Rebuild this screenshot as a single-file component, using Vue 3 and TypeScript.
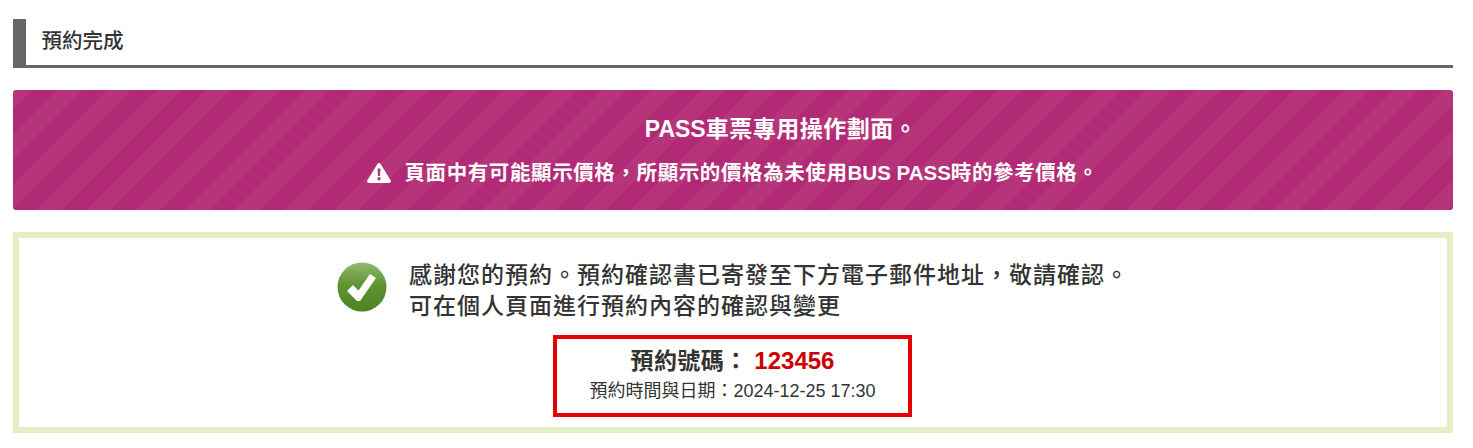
<script setup lang="ts">
const title = '預約完成'
</script>

<template>
  <main class="page" lang="zh-Hant">
    <h2 class="heading">{{ title }}</h2>
    <section class="banner">
      <p class="banner-title"><span class="latin">PASS</span>車票專用操作劃面。</p>
      <p class="banner-note">
        <svg class="warn" viewBox="0 0 24 20" width="24" height="20" aria-hidden="true">
          <path fill="#fff" fill-rule="evenodd" d="M12 0c.7 0 1.200.4 1.600 1l10 16.200c.8 1.400 0 2.800-1.600 2.800H2c-1.600 0-2.400-1.400-1.600-2.800L10.400 1c.4-.6.900-1 1.600-1zM10.500 5.500l.5 7.500h2l.5-7.500h-3zM12 14a1.700 1.700 0 1 0 0 3.400 1.700 1.700 0 0 0 0-3.400z"/>
        </svg>
        <span>頁面中有可能顯示價格，所顯示的價格為未使用<span class="latin">BUS PASS</span>時的參考價格。</span>
      </p>
    </section>
    <section class="done">
      <div class="thanks">
        <svg class="check" viewBox="0 0 50 50" width="50" height="50" aria-hidden="true">
          <defs>
            <linearGradient id="g" x1="0" y1="0" x2="0" y2="1">
              <stop offset="0" stop-color="#93b96f" />
              <stop offset="0.45" stop-color="#5f9433" />
              <stop offset="1" stop-color="#4c8424" />
            </linearGradient>
          </defs>
          <circle cx="25" cy="25" r="24.500" fill="url(#g)" />
          <path fill="#fff" d="M10 29l6-6 5.500 5.500L33 12l6 4-16 23h-3z" />
        </svg>
        <p class="thanks-text">感謝您的預約。預約確認書已寄發至下方電子郵件地址，敬請確認。<br />可在個人頁面進行預約內容的確認與變更</p>
      </div>
      <div class="number-box">
        <p class="number">預約號碼： <b>123456</b></p>
        <p class="date">預約時間與日期：2024-12-25 17:30</p>
      </div>
    </section>
  </main>
</template>

<style scoped>
.page {
  width: 1440px;
  margin-left: 13px;
  padding-top: 19px;
  color: #333;
  font-family: "Liberation Sans", "Noto Sans CJK TC", sans-serif;
}
p, h2 { margin: 0; }
.heading {
  height: 46px;
  border-left: 13px solid #666;
  border-bottom: 3px solid #666;
  padding-left: 15.500px;
  font-size: 20.500px;
  font-weight: 500;
  line-height: 43px;
}
.banner {
  height: 120px;
  margin-top: 22px;
  border-radius: 3px;
  color: #fff;
  font-weight: 700;
  text-align: center;
  background: repeating-linear-gradient(135deg, #b6357a 0 14px, #b22a75 14px 31.500px, #b6357a 31.500px 35px);
}
.banner-title {
  padding: 24px 0 0 96px;
  font-size: 23px;
  letter-spacing: 0.500px;
  line-height: 30px;
}
.latin { letter-spacing: 0; }
.banner-note {
  margin-top: 15px;
  display: flex;
  justify-content: center;
  align-items: center;
  gap: 13px;
  font-size: 20.500px;
  letter-spacing: 0.600px;
  line-height: 28px;
}
.done {
  height: 201px;
  margin-top: 22px;
  box-sizing: border-box;
  border: 6px solid #e5efc5;
  display: flex;
  flex-direction: column;
  align-items: center;
}
.thanks { display: flex; align-items: flex-start; gap: 22px; margin-top: 22px; }
.check { margin-top: 2px; }
.thanks-text { font-size: 23px; letter-spacing: 1px; line-height: 31px; font-weight: 500; }
.number-box {
  width: 359px;
  height: 82px;
  box-sizing: border-box;
  margin: 13px 1px 0 0;
  border: 4px solid #e60000;
  text-align: center;
}
.number { font-size: 23px; letter-spacing: 0.400px; line-height: 30px; margin-top: 7px; font-weight: 700; }
.number b { color: #c00; font-size: 24px; letter-spacing: 0; }
.date { font-size: 18px; line-height: 30px; }
</style>
